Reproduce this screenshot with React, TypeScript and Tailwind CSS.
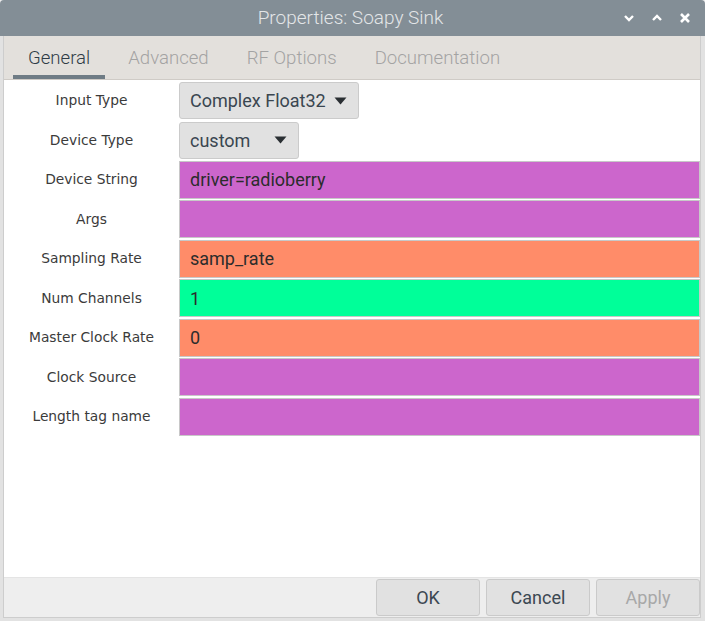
import React from "react";

const rows: { label: string; kind: "combo" | "entry"; value?: string; color?: string; w?: string }[] = [
  { label: "Input Type", kind: "combo", value: "Complex Float32", w: "w-[180px]" },
  { label: "Device Type", kind: "combo", value: "custom", w: "w-[120px]" },
  { label: "Device String", kind: "entry", value: "driver=radioberry", color: "bg-[#cc66cc]" },
  { label: "Args", kind: "entry", value: "", color: "bg-[#cc66cc]" },
  { label: "Sampling Rate", kind: "entry", value: "samp_rate", color: "bg-[#ff8c69]" },
  { label: "Num Channels", kind: "entry", value: "1", color: "bg-[#00ff99]" },
  { label: "Master Clock Rate", kind: "entry", value: "0", color: "bg-[#ff8c69]" },
  { label: "Clock Source", kind: "entry", value: "", color: "bg-[#cc66cc]" },
  { label: "Length tag name", kind: "entry", value: "", color: "bg-[#cc66cc]" },
];

function Arrow() {
  return (
    <svg width="13" height="8" viewBox="0 0 13 8">
      <path d="M0.5 0.5 L12.5 0.5 L6.5 7.5 Z" fill="#2a2f33" />
    </svg>
  );
}

export default function App() {
  return (
    <div
      className="w-[705px] h-[621px] flex flex-col bg-[#eeeeee] overflow-hidden"
      style={{ fontFamily: "Roboto, 'Liberation Sans', sans-serif" }}
    >
      {/* Title bar */}
      <div className="h-[36px] shrink-0 bg-[#838e96] rounded-t-[4px] relative flex items-center justify-center">
        <span className="text-[19px] text-[#e3e6e8] font-light pr-[4px]">Properties: Soapy Sink</span>
        <div className="absolute right-[14px] top-0 h-full flex items-center gap-[16px]">
          <svg width="12" height="8" viewBox="0 0 12 8">
            <path d="M2 2 L6 6 L10 2" stroke="#ffffff" strokeWidth="2.4" fill="none" />
          </svg>
          <svg width="12" height="8" viewBox="0 0 12 8">
            <path d="M2 6 L6 2 L10 6" stroke="#ffffff" strokeWidth="2.4" fill="none" />
          </svg>
          <svg width="12" height="12" viewBox="0 0 12 12">
            <path d="M2 2 L10 10 M10 2 L2 10" stroke="#ffffff" strokeWidth="2.6" fill="none" />
          </svg>
        </div>
      </div>

      {/* Body */}
      <div className="flex-1 flex flex-col border-l-[3px] border-r-[4px] border-b-[3px] border-[#e2e2e2]">
        <div className="flex-1 flex flex-col border-l border-r border-b border-[#cdcdcd]">
          {/* Tabs */}
          <div className="h-[44px] shrink-0 bg-[#e3e0dc] border-b border-[#cfcbc6] flex items-stretch pl-[9px] gap-[8px]">
            {["General", "Advanced", "RF Options", "Documentation"].map((t, i) => (
              <div key={t} className="relative flex items-center px-[15px] pt-[3px]">
                <span className={`text-[18.6px] font-light ${i === 0 ? "text-[#2f3c47]" : "text-[#a3a3a3]"}`}>{t}</span>
                {i === 0 && <div className="absolute left-0 right-0 bottom-0 h-[4px] bg-[#6f7c85]" />}
              </div>
            ))}
          </div>

          {/* Content */}
          <div className="flex-1 bg-white flex flex-col pt-[2px] gap-[2.5px]">
            {rows.map((r) => (
              <div key={r.label} className="flex items-center h-[37px]">
                <div
                  className="w-[175px] shrink-0 text-center text-[13.8px] text-[#3b3b3b]"
                  style={{ fontFamily: "'DejaVu Sans', sans-serif" }}
                >
                  {r.label}
                </div>
                {r.kind === "combo" ? (
                  <div
                    className={`${r.w} h-[37px] bg-[#e1e1e1] border border-[#cbcbcb] rounded-[3px] flex items-center justify-between pl-[10px] pr-[11px]`}
                  >
                    <span className="text-[18px] text-[#3a4650]">{r.value}</span>
                    <Arrow />
                  </div>
                ) : (
                  <div
                    className={`flex-1 h-[38px] ${r.color} border border-[#c8c8c8] flex items-center pl-[10px]`}
                  >
                    <span className="text-[18px] text-[#2c2c2c]">{r.value}</span>
                  </div>
                )}
              </div>
            ))}
          </div>

          {/* Buttons */}
          <div className="h-[40px] shrink-0 bg-[#eeeeee] border-t border-[#e4e4e4] flex items-center justify-end gap-[6px]">
            {[
              { t: "OK", c: "text-[#3c4852]" },
              { t: "Cancel", c: "text-[#3c4852]" },
              { t: "Apply", c: "text-[#a8a8a8]" },
            ].map((b) => (
              <div
                key={b.t}
                className="w-[104px] h-[37px] bg-[#e1e1e1] border border-[#cacaca] rounded-[3px] flex items-center justify-center"
              >
                <span className={`text-[18px] ${b.c}`}>{b.t}</span>
              </div>
            ))}
          </div>
        </div>
      </div>
    </div>
  );
}
